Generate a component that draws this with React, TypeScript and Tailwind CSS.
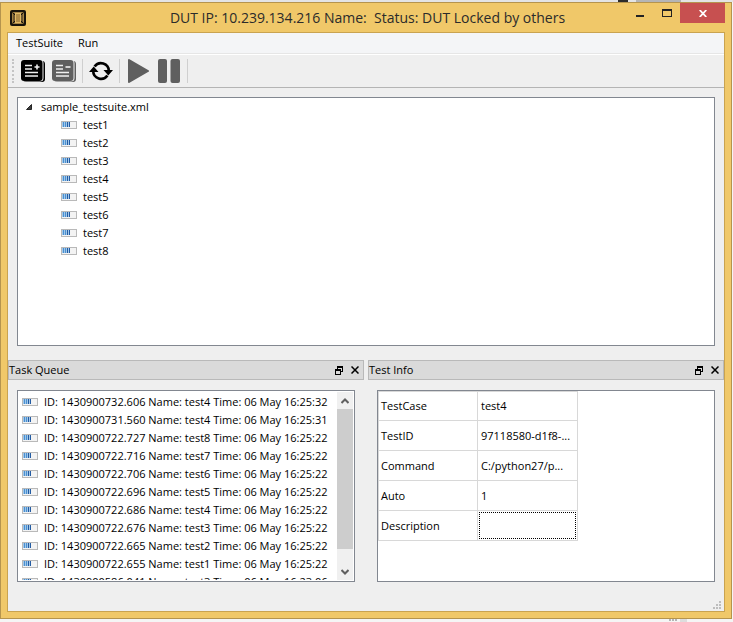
import type { ReactNode } from 'react';

const tests = ['test1', 'test2', 'test3', 'test4', 'test5', 'test6', 'test7', 'test8'];

const tasks = [
  { id: '1430900732.606', name: 'test4', time: '06 May 16:25:32' },
  { id: '1430900731.560', name: 'test4', time: '06 May 16:25:31' },
  { id: '1430900722.727', name: 'test8', time: '06 May 16:25:22' },
  { id: '1430900722.716', name: 'test7', time: '06 May 16:25:22' },
  { id: '1430900722.706', name: 'test6', time: '06 May 16:25:22' },
  { id: '1430900722.696', name: 'test5', time: '06 May 16:25:22' },
  { id: '1430900722.686', name: 'test4', time: '06 May 16:25:22' },
  { id: '1430900722.676', name: 'test3', time: '06 May 16:25:22' },
  { id: '1430900722.665', name: 'test2', time: '06 May 16:25:22' },
  { id: '1430900722.655', name: 'test1', time: '06 May 16:25:22' },
  { id: '1430900586.041', name: 'test3', time: '06 May 16:23:06' },
];

const info = [
  ['TestCase', 'test4'],
  ['TestID', '97118580-d1f8-...'],
  ['Command', 'C:/python27/p...'],
  ['Auto', '1'],
  ['Description', ''],
];

function ProgressIcon() {
  return (
    <svg width="16" height="8" viewBox="0 0 16 8" shapeRendering="crispEdges" className="shrink-0" aria-hidden="true">
      <rect width="16" height="8" fill="#b9b9b9" />
      <rect x="1" y="1" width="14" height="6" fill="#f3f3f3" />
      <rect x="1" y="1" width="8" height="5" fill="#a3c8ea" />
      <path d="M2 1h1v5H2zM4 1h1v5H4z" fill="#4a90d0" />
      <path d="M6 1h1v5H6zM8 1h1v5H8z" fill="#245ca3" />
    </svg>
  );
}

function AppIcon() {
  return (
    <svg width="16" height="16" viewBox="0 0 16 16" aria-hidden="true">
      <rect width="16" height="16" rx="2" fill="#17130b" />
      <rect x="2.5" y="2.5" width="11" height="11" rx="1" fill="#6d5730" stroke="#a58445" />
      <path d="M3 3l2 2M13 3l-2 2M3 13l2-2M13 13l-2-2" stroke="#17130b" />
      <rect x="5.5" y="3.5" width="5" height="9" fill="#b08c48" stroke="#e0b964" />
    </svg>
  );
}

function SheetIcon({ plus }: { plus?: boolean }) {
  const fill = plus ? '#000000' : '#5f5f5f';
  return (
    <svg width="24" height="22" viewBox="0 0 24 22" aria-hidden="true">
      <rect x="2" y="1" width="22" height="21" rx="3" fill={fill} />
      <rect x="0" y="0" width="22.5" height="21.5" rx="3.5" fill="#efefef" />
      <rect x="0" y="0" width="21.5" height="21" rx="3" fill={fill} />
      <path d="M4 5.500h7M4 9h7M4 12.500h13M4 16h13" stroke="#efefef" strokeWidth="1.4" />
      <path d={plus ? 'M13.5 7h5M16 4.5v5' : 'M13.5 7h5'} stroke="#efefef" strokeWidth="1.6" />
    </svg>
  );
}

function RefreshIcon() {
  return (
    <svg width="24" height="20" viewBox="0 0 24 20" fill="none" aria-hidden="true">
      <path d="M5.600 5.600A7.800 7.800 0 0 1 19.800 10M18.400 14.400A7.800 7.800 0 0 1 4.200 10" stroke="#000" strokeWidth="2.600" />
      <path d="M14.500 9H24l-4.700 5.500zM9.500 11H0l4.700-5.500z" fill="#000" />
    </svg>
  );
}

function DockButtons() {
  return (
    <div className="flex items-center">
      <button type="button" aria-label="Float" className="flex h-4 w-4 items-center justify-center">
        <svg width="8" height="9" viewBox="0 0 8 9" shapeRendering="crispEdges" aria-hidden="true">
          <path d="M2 0h6v6H6V5h1V2H3v1H2zM0 3h6v6H0zM1 5v3h4V5z" fill="#000" fillRule="evenodd" />
        </svg>
      </button>
      <button type="button" aria-label="Close" className="flex h-4 w-4 items-center justify-center">
        <svg width="8" height="8" viewBox="0 0 8 8" aria-hidden="true">
          <path d="M.5.5l7 7M7.5.5l-7 7" stroke="#000" strokeWidth="1.5" />
        </svg>
      </button>
    </div>
  );
}

function Dock({ title, children }: { title: string; children: ReactNode }) {
  return (
    <section className="flex min-w-0 flex-col">
      <header className="flex h-5 items-center justify-between border border-[#b9b9b9] bg-[#dadada]">
        <h2>{title}</h2>
        <DockButtons />
      </header>
      <div className="px-[9px] pt-[10px]">
        <div className="flex h-48 border border-[#828790] bg-white">{children}</div>
      </div>
    </section>
  );
}

function Separator() {
  return <span className="h-6 w-px bg-[#cfcfcf]" />;
}

function SizeGrip() {
  return (
    <svg width="8" height="8" viewBox="0 0 8 8" shapeRendering="crispEdges" aria-hidden="true">
      <path d="M6 0h2v2H6zM3 3h2v2H3zM6 3h2v2H6zM0 6h2v2H0zM3 6h2v2H3zM6 6h2v2H6z" fill="#bdbdbd" />
    </svg>
  );
}

function Desktop({ children }: { children: ReactNode }) {
  return (
    <div className="flex h-screen min-h-[560px] flex-col bg-[#f5f5f5] font-['Open_Sans','Noto_Sans',sans-serif] text-[11px] leading-[18px] text-black">
      <div className="flex h-0.5 justify-end bg-[#e4e4e4] pr-[52px]">
        <span className="mr-2 w-[10px] bg-[#2b2b2b]" />
        <span className="w-[45px] bg-[#b5b5b5]" />
      </div>
      {children}
      <div className="flex h-[3px] justify-end pr-[46px]">
        <span className="w-2 border-t-2 border-dotted border-[#b5b5b5]" />
        <span className="ml-[3px] w-[7px] bg-[#dddddd]" />
      </div>
    </div>
  );
}

export default function App() {
  return (
    <Desktop>
      <div className="mr-px flex min-h-0 flex-1 flex-col border border-[#b5944e] bg-[#f0c869]">
        <header className="grid h-[29px] shrink-0 grid-cols-[1fr_auto_1fr] items-center pr-1.5 pl-[9px]">
          <AppIcon />
          <h1 className="text-[14px] whitespace-pre text-[#2b2b2b]">
            {'DUT IP: 10.239.134.216 Name:  Status: DUT Locked by others'}
          </h1>
          <div className="flex justify-end self-start">
            <button type="button" aria-label="Minimize" className="flex h-5 w-[27px] items-end justify-center pb-1.5">
              <span className="h-0.5 w-2 bg-[#222222]" />
            </button>
            <button type="button" aria-label="Maximize" className="flex h-5 w-[27px] items-center justify-center">
              <span className="h-2 w-[10px] border border-t-2 border-[#222222]" />
            </button>
            <button type="button" aria-label="Close" className="flex h-5 w-[45px] items-center justify-center bg-[#c75050]">
              <svg width="8" height="7" viewBox="0 0 8 7" aria-hidden="true">
                <path d="M.7 0l6.6 7M7.3 0L.7 7" stroke="#fff" strokeWidth="1.8" />
              </svg>
            </button>
          </div>
        </header>

        <main className="mx-1.5 mb-1.5 flex min-h-0 flex-1 flex-col border border-[#c9a350] bg-[#efefef]">
          <nav className="flex h-[22px] shrink-0 items-start gap-[15px] border-b border-white bg-[#f4f5f7] pl-2 shadow-[inset_0_-1px_0_#e6e6e6]">
            <button type="button" className="h-5">TestSuite</button>
            <button type="button" className="h-5">Run</button>
          </nav>

          <div className="flex h-[33px] shrink-0 items-center border-b border-[#b4b4b4] pl-1">
            <span className="h-6 border-l-2 border-dotted border-[#c4c4c4]" />
            <button type="button" aria-label="Add test suite" className="ml-[7px] w-6"><SheetIcon plus /></button>
            <button type="button" aria-label="Remove test suite" className="mr-[6px] ml-[7px] w-6"><SheetIcon /></button>
            <Separator />
            <button type="button" aria-label="Refresh" className="mx-1.5 w-6"><RefreshIcon /></button>
            <Separator />
            <button type="button" aria-label="Run" className="mr-[9px] ml-2">
              <svg width="21" height="24" viewBox="0 0 21 24" aria-hidden="true">
                <path d="M1 1l19 11L1 23z" fill="#5f5f5f" stroke="#5f5f5f" strokeWidth="2" strokeLinejoin="round" />
              </svg>
            </button>
            <button type="button" aria-label="Pause" className="mr-[7px]">
              <svg width="22" height="24" viewBox="0 0 22 24" fill="#5f5f5f" aria-hidden="true">
                <rect width="9" height="24" rx="2" />
                <rect x="12.5" width="9.5" height="24" rx="2" />
              </svg>
            </button>
            <Separator />
          </div>

          <div className="mx-[9px] mt-[9px] min-h-0 flex-1 overflow-hidden border border-[#828790] bg-white">
            <div className="flex items-center gap-[9px] pl-2">
              <svg width="6" height="6" viewBox="0 0 6 6" aria-hidden="true">
                <path d="M5.5.5v5h-5z" fill="#404040" stroke="#262626" />
              </svg>
              sample_testsuite.xml
            </div>
            <ul>
              {tests.map((t) => (
                <li key={t} className="flex items-center gap-1.5 pl-[43px]">
                  <ProgressIcon />
                  {t}
                </li>
              ))}
            </ul>
          </div>

          <div className="mt-[14px] grid shrink-0 grid-cols-2 gap-1">
            <Dock title="Task Queue">
              <ul className="m-px min-w-0 flex-1 overflow-hidden pt-px">
                {tasks.map((t) => (
                  <li key={t.id} className="flex items-center gap-1.5 pl-[3px] whitespace-nowrap">
                    <ProgressIcon />
                    {`ID: ${t.id} Name: ${t.name} Time: ${t.time}`}
                  </li>
                ))}
              </ul>
              <div className="my-px mr-px flex w-4 flex-col bg-[#f0f0f0]">
                <button type="button" aria-label="Scroll up" className="flex h-[17px] items-center justify-center">
                  <svg width="8" height="6" viewBox="0 0 8 6" fill="none" aria-hidden="true">
                    <path d="M.5 5L4 1.5 7.5 5" stroke="#606060" strokeWidth="2" />
                  </svg>
                </button>
                <span className="h-[140px] bg-[#cdcdcd]" />
                <button type="button" aria-label="Scroll down" className="mt-auto flex h-[17px] items-center justify-center">
                  <svg width="8" height="6" viewBox="0 0 8 6" fill="none" aria-hidden="true">
                    <path d="M.5 1L4 4.500 7.5 1" stroke="#606060" strokeWidth="2" />
                  </svg>
                </button>
              </div>
            </Dock>
            <Dock title="Test Info">
              <table className="w-[200px] table-fixed border-separate border-spacing-0 self-start shadow-[inset_1px_1px_0_#d8d8d8]">
                <tbody>
                  {info.map(([k, v]) => (
                    <tr key={k} className="h-[30px]">
                      <th scope="row" className="border-r border-b border-[#d8d8d8] pl-[3px] text-left font-normal">{k}</th>
                      <td className="border-r border-b border-[#d8d8d8] p-px">
                        <div className={v ? 'px-0.5 whitespace-nowrap' : 'h-[27px] border border-dotted border-black'}>{v}</div>
                      </td>
                    </tr>
                  ))}
                </tbody>
              </table>
            </Dock>
          </div>

          <footer className="flex h-[29px] shrink-0 items-end justify-end pr-[3px] pb-0.5">
            <SizeGrip />
          </footer>
        </main>
      </div>
    </Desktop>
  );
}
